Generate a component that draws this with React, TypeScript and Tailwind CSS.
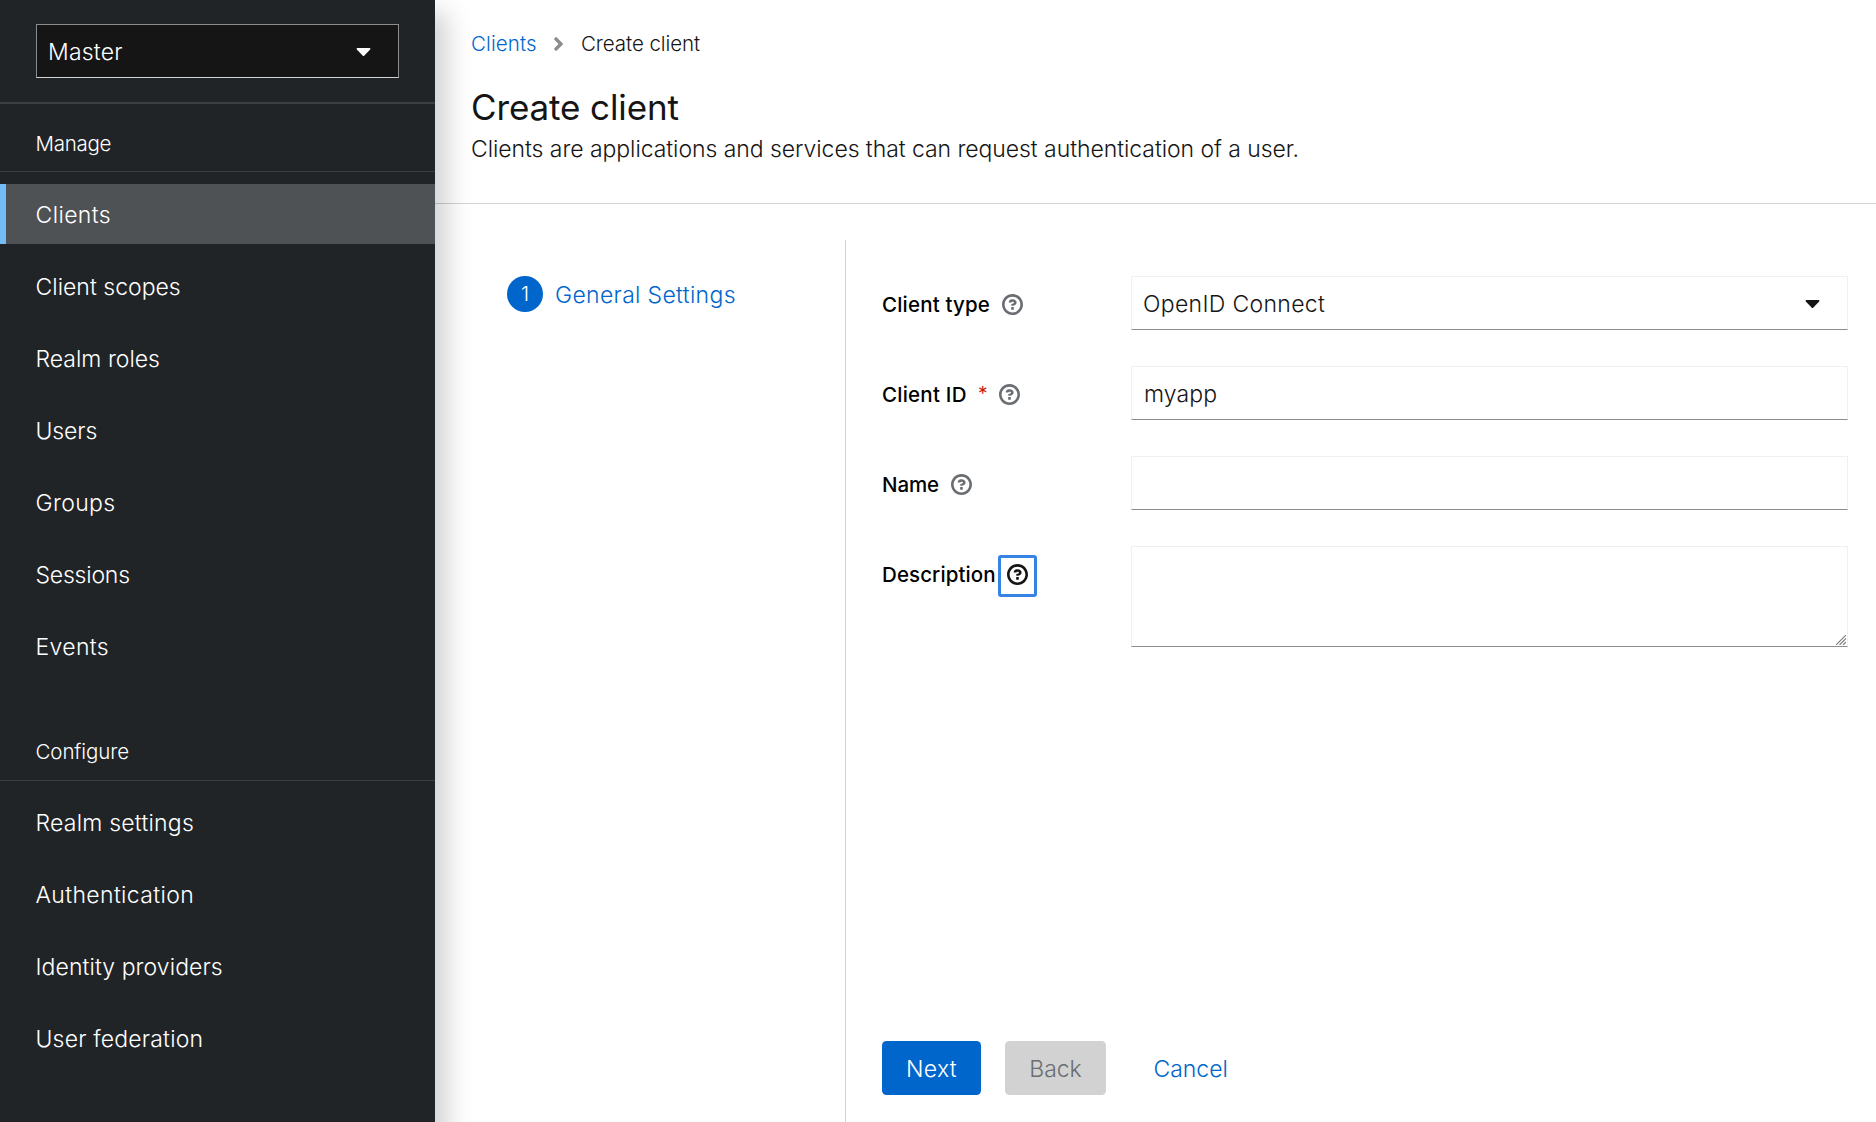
import type { ReactNode } from "react";

type NavEntry = { label: string; tracking: string; active?: boolean };

const manageItems: NavEntry[] = [
  { label: "Clients", tracking: "tracking-[0.39px]", active: true },
  { label: "Client scopes", tracking: "tracking-[0.01px]" },
  { label: "Realm roles", tracking: "tracking-[0px]" },
  { label: "Users", tracking: "tracking-[-0.1px]" },
  { label: "Groups", tracking: "tracking-[0.34px]" },
  { label: "Sessions", tracking: "tracking-[-0.21px]" },
  { label: "Events", tracking: "tracking-[0.35px]" },
];

const configureItems: NavEntry[] = [
  { label: "Realm settings", tracking: "tracking-[0.22px]" },
  { label: "Authentication", tracking: "tracking-[0.35px]" },
  { label: "Identity providers", tracking: "tracking-[0.07px]" },
  { label: "User federation", tracking: "tracking-[0.18px]" },
];

function CaretDown() {
  return (
    <svg viewBox="0 0 320 512" className="h-6 w-[15px] shrink-0" fill="currentColor" aria-hidden="true">
      <path d="M31.3 192h257.3c17.8 0 26.7 21.5 14.1 34.1L174.1 354.8c-7.8 7.8-20.5 7.8-28.3 0L17.2 226.1C4.6 213.5 13.4 192 31.3 192z" />
    </svg>
  );
}

function AngleRight() {
  return (
    <svg viewBox="0 0 256 512" className="h-[22px] w-[11px] shrink-0 text-[#8a8d90]" fill="currentColor" aria-hidden="true">
      <path d="M224.3 273l-136 136c-9.4 9.4-24.6 9.4-33.9 0l-22.6-22.6c-9.4-9.4-9.4-24.6 0-33.9l96.4-96.4-96.4-96.4c-9.4-9.4-9.4-24.6 0-33.9L54.3 103c9.4-9.4 24.6-9.4 33.9 0l136 136c9.5 9.4 9.5 24.6.1 34z" />
    </svg>
  );
}

function HelpIcon() {
  return (
    <svg viewBox="0 0 1024 1024" className="size-[21px] shrink-0" fill="currentColor" aria-hidden="true">
      <path d="M521.3 576C627.5 576 713.7 502 713.7 413.7S627.6 253.6 521.3 253.6C366 253.6 334.5 337.7 329.2 407.2c0 7.1 6 8.8 14.3 8.8H445c5.5 0 13-.5 15.8-9.5 0-43.9 122.1-49.4 122.1 7.1 0 28.3-26.7 57.3-61.6 59.4s-74 6.8-74 48.7v32.1c0 17 8.8 22.2 24.7 22.2h49.3M575.3 751.3v-96c0-8.8-7.2-16-16-16h-96c-8.8 0-16 7.2-16 16v96c0 8.8 7.2 16 16 16h96c8.8 0 16-7.2 16-16M512 896c-211.8 0-384-172.1-384-384 0-211.7 172.2-384 384-384s384 172.2 384 384-172.3 384-384 384M512.1 0C229.7 0 0 229.8 0 512s229.8 512 512.1 512S1024 794.3 1024 512 794.4 0 512.1 0" />
    </svg>
  );
}

function ResizeGrip() {
  return (
    <svg viewBox="0 0 10 10" className="absolute right-0.5 bottom-0.5 size-[10px]" stroke="#7a7a7a" strokeWidth="1.1" aria-hidden="true">
      <path d="M0 10L10 0M3.5 10L10 3.5M7 10L10 7" fill="none" />
    </svg>
  );
}

type NavSectionProps = { title: string; titleClass: string; itemClass: string; items: NavEntry[] };

function NavSection({ title, titleClass, itemClass, items }: NavSectionProps) {
  return (
    <section>
      <h2 className={`flex h-[57px] items-center border-b border-[#3c3f42] pl-[35.5px] text-[20.5px] ${titleClass}`}>{title}</h2>
      <ul className="flex flex-col gap-3 pt-3">
        {items.map((item) => (
          <li key={item.label}>
            <a
              className={`flex h-[60px] items-center border-l-[6px] pl-[29.5px] ${itemClass} ${item.tracking} ${
                item.active ? "border-[#73bcf7] bg-[#4f5255]" : "border-transparent"
              }`}
            >
              {item.label}
            </a>
          </li>
        ))}
      </ul>
    </section>
  );
}

function Sidebar() {
  return (
    <aside className="z-10 flex h-[1170px] w-[435px] shrink-0 flex-col bg-[#212427] text-white shadow-[24px_0_24px_-12px_rgba(3,3,3,0.18)]">
      <div className="border-b-2 border-[#3c3f42] px-9 py-6">
        <button className="flex h-[54px] w-[363px] items-center justify-between border border-[#8a8d90] border-b-[#d2d2d2] bg-[#151515] pr-[27.5px] pl-[11px] tracking-[0.22px]">
          <span className="pt-0.5">Master</span>
          <CaretDown />
        </button>
      </div>
      <nav className="flex flex-col gap-12 pt-[11px]">
        <NavSection title="Manage" titleClass="pt-0.5 tracking-[-0.28px]" itemClass="pt-0.5" items={manageItems} />
        <NavSection title="Configure" titleClass="tracking-[-0.09px]" itemClass="pt-0" items={configureItems} />
      </nav>
    </aside>
  );
}

function PageHeader() {
  return (
    <header className="flex h-[204px] shrink-0 flex-col border-b border-[#d2d2d2] pl-9">
      <div className="mt-[28px] flex h-[31px] items-center text-[20.5px]">
        <a className="w-[82px] tracking-[0.11px] text-[#0066cc]">Clients</a>
        <AngleRight />
        <span className="pl-[17px] tracking-[-0.07px] text-[#151515]">Create client</span>
      </div>
      <h1 className="mt-[25px] text-[35px] leading-[46px] font-normal tracking-[-0.12px] text-[#151515]">Create client</h1>
      <p className="pt-px leading-[36px] tracking-[-0.06px]">
        Clients are applications and services that can request authentication of a user.
      </p>
    </header>
  );
}

type FieldProps = {
  label: string;
  labelClass: string;
  required?: boolean;
  focused?: boolean;
  children: ReactNode;
};

function Field({ label, labelClass, required, focused, children }: FieldProps) {
  return (
    <div className="flex items-start">
      <div className="flex h-[57px] w-[249px] shrink-0 items-center">
        <label className={`shrink-0 pt-px text-[20.5px] font-medium text-black ${labelClass}`}>{label}</label>
        {required && <span className="w-[21px] shrink-0 pb-px text-[19px] font-normal text-[#c9190b]">*</span>}
        {focused ? (
          <button className="mt-0.5 flex h-[42px] w-[39px] shrink-0 justify-center rounded-[3px] border-[3px] border-[#3584e4] pt-[6px] text-[#151515]">
            <HelpIcon />
          </button>
        ) : (
          <button className="shrink-0 text-[#6a6e73]">
            <HelpIcon />
          </button>
        )}
      </div>
      {children}
    </div>
  );
}

const control = "w-[717px] border border-[#f0f0f0] border-b-[#8a8d90] bg-white font-light text-[#151515] outline-none";

function ClientForm() {
  return (
    <form className="flex flex-col gap-[33px]">
      <Field label="Client type" labelClass="w-[120px] tracking-[0.18px]">
        <button type="button" className={`flex h-[54px] items-center justify-between pr-[27.5px] pl-[11px] tracking-[0.32px] ${control}`}>
          <span className="pt-0.5">OpenID Connect</span>
          <CaretDown />
        </button>
      </Field>
      <Field label="Client ID" labelClass="w-[96px] tracking-[0.24px]" required>
        <input className={`h-[54px] pt-0.5 pr-3 pl-3 tracking-[0.1px] ${control}`} defaultValue="myapp" />
      </Field>
      <Field label="Name" labelClass="w-[69px] tracking-[-0.1px]">
        <input className={`h-[54px] px-3 ${control}`} />
      </Field>
      <Field label="Description" labelClass="w-[116px] tracking-[0.1px]" focused>
        <div className="relative">
          <textarea className={`block h-[101px] resize-none px-3 ${control}`} />
          <ResizeGrip />
        </div>
      </Field>
    </form>
  );
}

export default function App() {
  return (
    <div className="flex h-[1122px] w-[1876px] overflow-hidden bg-white font-['Inter',sans-serif] text-[23px] leading-[36px] font-light text-[#151515]">
      <Sidebar />
      <main className="flex min-w-0 flex-1 flex-col">
        <PageHeader />
        <div className="flex flex-1 pt-9">
          <aside className="w-[411px] shrink-0 border-r border-[#d2d2d2] pt-9 pl-[72px]">
            <a className="flex h-9 items-center gap-3 text-[#0066cc]">
              <span className="flex size-9 items-center justify-center rounded-full bg-[#0066cc] text-[20.5px] text-white">1</span>
              <span className="pt-0.5 tracking-[0.32px]">General Settings</span>
            </a>
          </aside>
          <section className="flex flex-1 flex-col justify-between pt-9 pb-[27px] pl-9">
            <ClientForm />
            <footer className="flex h-[54px] gap-6">
              <button className="w-[99px] rounded-[4.5px] bg-[#0066cc] pt-0.5 tracking-[0.28px] text-white">Next</button>
              <button className="w-[101px] rounded-[4.5px] bg-[#d2d2d2] pt-0.5 tracking-[-0.04px] text-[#6a6e73]">Back</button>
              <button className="pt-0.5 pl-[23.5px] tracking-[-0.02px] text-[#0066cc]">Cancel</button>
            </footer>
          </section>
        </div>
      </main>
    </div>
  );
}
